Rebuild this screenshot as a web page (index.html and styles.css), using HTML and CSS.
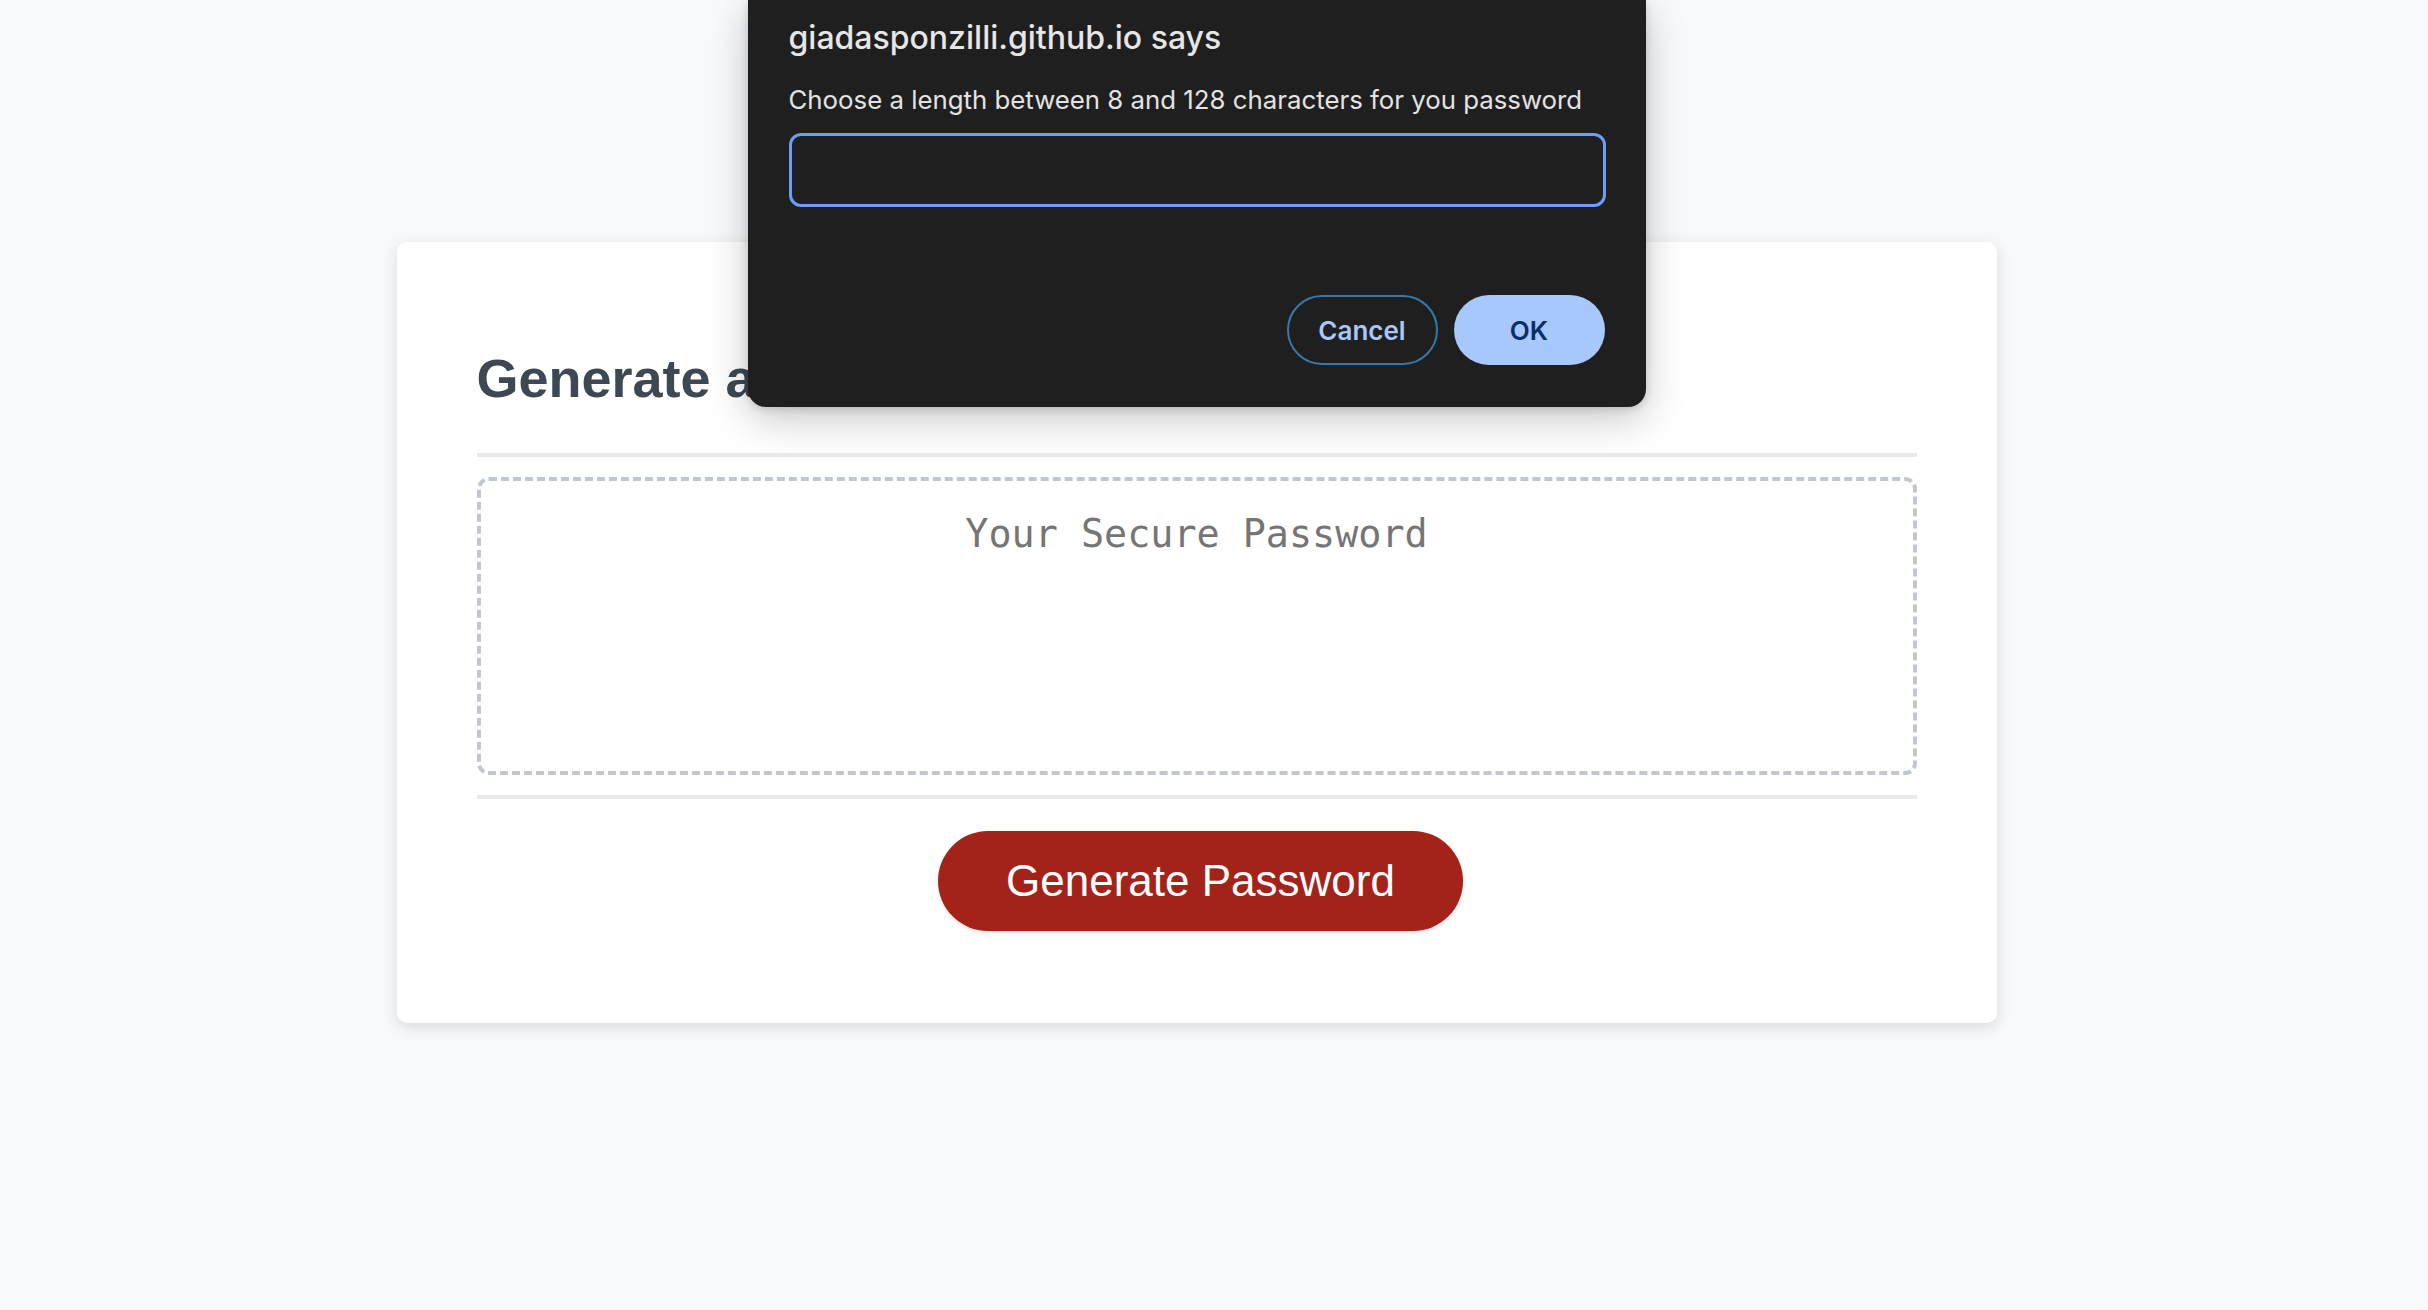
FILE: index.html
```html
<!DOCTYPE html>
<html lang="en">
<head>
<meta charset="utf-8">
<title>Password Generator</title>
<link rel="stylesheet" href="styles.css">
</head>
<body>
<div class="page">
  <div class="wrapper">
    <div class="card">
      <div class="card-header">
        <h2>Generate a Password</h2>
      </div>
      <div class="card-body">
        <div class="password-box">Your Secure Password</div>
      </div>
      <div class="card-footer">
        <div class="footer-actions">
          <button class="btn">Generate Password</button>
        </div>
      </div>
    </div>
  </div>

  <div class="dialog">
    <div class="dialog-title">giadasponzilli.github.io says</div>
    <div class="dialog-message">Choose a length between 8 and 128 characters for you password</div>
    <div class="dialog-input"></div>
    <div class="dialog-actions">
      <button class="dlg-btn dlg-cancel">Cancel</button>
      <button class="dlg-btn dlg-ok">OK</button>
    </div>
  </div>
</div>
</body>
</html>
```

FILE: styles.css
```css
*, *::before, *::after {
  box-sizing: border-box;
}

html, body {
  margin: 0;
  padding: 0;
}

body {
  background-color: #f8f9fa;
  font-family: "Liberation Sans", Arial, sans-serif;
  overflow: hidden;
}

.page {
  position: relative;
  width: 2393px;
  height: 1310px;
}

.wrapper {
  padding: 242px 40px 0;
}

.card {
  background-color: #ffffff;
  border-radius: 10px;
  box-shadow: rgba(0, 0, 0, 0.13) 0px 4px 16px 0px;
  color: #3b4954;
  font-size: 36px;
  margin: 0 auto;
  max-width: 1600px;
  padding: 60px 80px;
}

.card-header h2 {
  margin: 45px 0 44px;
  font-size: 54px;
  line-height: 62px;
  font-weight: 700;
  color: #3d4852;
}

.card-header::after,
.card-footer::before {
  content: "";
  display: block;
  width: 100%;
  height: 4px;
  background: #e7e9eb;
}

.password-box {
  height: 298px;
  margin: 20px 0;
  padding: 30px 30px 0;
  border: 4px dashed #c0c7cf;
  border-radius: 12px;
  text-align: center;
  font-family: "DejaVu Sans Mono", "Liberation Mono", monospace;
  font-size: 38.4px;
  color: #757575;
}

.footer-actions {
  display: flex;
  justify-content: center;
}

.btn {
  border: none;
  background-color: #a3231b;
  border-radius: 50px;
  box-shadow: 0 2px 4px 0 rgba(0, 0, 0, 0.12);
  color: #ffffff;
  font-family: "Liberation Sans", Arial, sans-serif;
  font-size: 44px;
  line-height: 44px;
  margin: 32px 32px 32px 40px;
  padding: 28px 68px;
  cursor: pointer;
}

/* Browser prompt dialog */
.dialog {
  position: absolute;
  top: 0;
  left: 50%;
  margin-left: -449px;
  width: 898px;
  height: 407px;
  padding: 19px 40px 0 41px;
  background: #1f1f1f;
  border-radius: 0 0 18px 18px;
  box-shadow: 0 12px 40px rgba(0, 0, 0, 0.22), 0 2px 8px rgba(0, 0, 0, 0.15);
  font-family: Inter, "Noto Sans", sans-serif;
  color: #e3e3e3;
}

.dialog-title {
  font-size: 32px;
  line-height: 37px;
  font-weight: 500;
  color: #e6e6e6;
}

.dialog-message {
  margin-top: 28px;
  font-size: 25.8px;
  line-height: 32px;
  font-weight: 400;
  color: #e3e3e3;
}

.dialog-input {
  margin-top: 17px;
  height: 74px;
  border: 3px solid #6d9ef3;
  border-radius: 12px;
  background: #1f1f1f;
}

.dialog-actions {
  margin-top: 88px;
  display: flex;
  justify-content: flex-end;
  gap: 16px;
  padding-right: 1px;
}

.dlg-btn {
  height: 70px;
  min-width: 151px;
  padding: 0 24px;
  border-radius: 35px;
  font-family: Inter, "Noto Sans", sans-serif;
  font-size: 26px;
  font-weight: 600;
  cursor: pointer;
}

.dlg-cancel {
  background: #1f1f1f;
  border: 2px solid #3579ad;
  color: #a8c7fa;
}

.dlg-ok {
  background: #a8c7fa;
  border: none;
  color: #062e6f;
}
```
